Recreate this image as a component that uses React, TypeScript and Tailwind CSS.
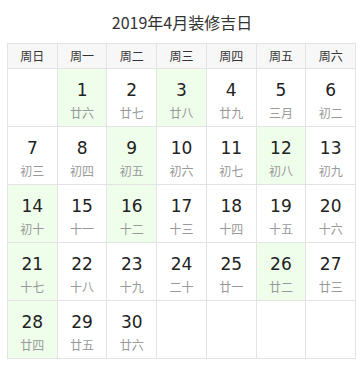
const weekdays = ["周日", "周一", "周二", "周三", "周四", "周五", "周六"];

const lunar = [
  "廿六", "廿七", "廿八", "廿九", "三月", "初二", "初三", "初四", "初五", "初六",
  "初七", "初八", "初九", "初十", "十一", "十二", "十三", "十四", "十五", "十六",
  "十七", "十八", "十九", "二十", "廿一", "廿二", "廿三", "廿四", "廿五", "廿六",
];

// 宜装修的日子
const goodDays = [1, 3, 9, 12, 14, 16, 21, 26, 28];

const font = "font-['DejaVu_Sans','Noto_Sans_CJK_SC',sans-serif]";

const App = () => {
  // 2019-04-01 是周一，前面空一格，后面补满五行
  const cells: (number | null)[] = [null];
  for (let d = 1; d <= 30; d++) cells.push(d);
  while (cells.length < 35) cells.push(null);

  return (
    <div className={`w-[357px] h-[392px] bg-white pl-[7px] ${font}`}>
      <h2 className="h-[43px] pt-[11px] text-center text-[16px] leading-[22px] text-[#333] font-['Noto_Sans_CJK_SC',sans-serif]">
        2019年4月装修吉日
      </h2>
      <div className="grid grid-cols-7 w-[349px] border-l border-t border-[#e3e3e3]">
        {weekdays.map((w) => (
          <div
            key={w}
            className="h-[25px] flex items-center justify-center bg-[#f7f7f7] border-r border-b border-[#e3e3e3] text-[12px] text-[#333] font-['Noto_Sans_CJK_SC',sans-serif]"
          >
            {w}
          </div>
        ))}
        {cells.map((d, i) => (
          <div
            key={i}
            className={`h-[58px] flex flex-col items-center pt-[10px] border-r border-b border-[#e3e3e3] ${
              d && goodDays.includes(d) ? "bg-[#effdeb]" : "bg-white"
            }`}
          >
            {d && (
              <>
                <span className="text-[17px] leading-[23px] text-[#222]">{d}</span>
                <span className="mt-[2px] text-[12px] leading-[18px] text-[#999] font-['Noto_Sans_CJK_SC',sans-serif]">
                  {lunar[d - 1]}
                </span>
              </>
            )}
          </div>
        ))}
      </div>
    </div>
  );
};

export default App;
